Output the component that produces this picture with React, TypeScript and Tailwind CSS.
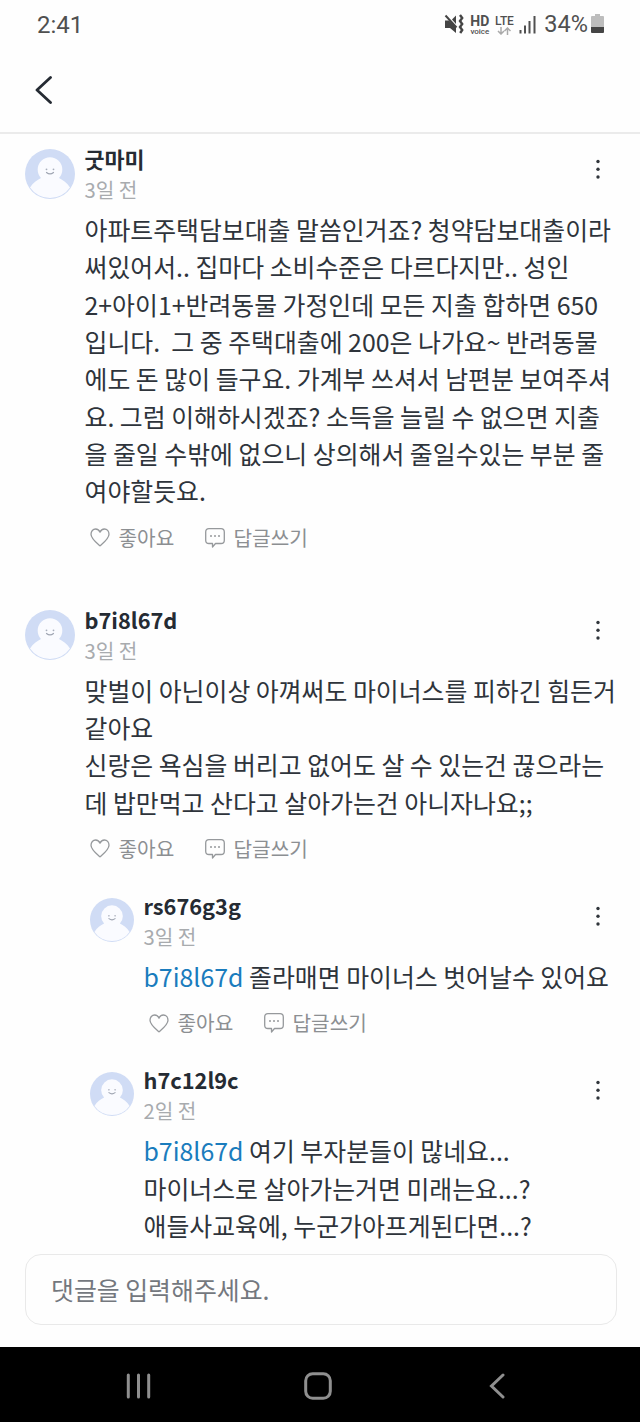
import React from 'react';

interface CommentData {
  author: string;
  time: string;
  mention?: string;
  lines: string[];
  actions: boolean;
  replies?: CommentData[];
}

const comments: CommentData[] = [
  {
    author: '굿마미',
    time: '3일 전',
    lines: [
      '아파트주택담보대출 말씀인거죠? 청약담보대출이라',
      '써있어서.. 집마다 소비수준은 다르다지만.. 성인',
      '2+아이1+반려동물 가정인데 모든 지출 합하면 650',
      '입니다.  그 중 주택대출에 200은 나가요~ 반려동물',
      '에도 돈 많이 들구요. 가계부 쓰셔서 남편분 보여주셔',
      '요. 그럼 이해하시겠죠? 소득을 늘릴 수 없으면 지출',
      '을 줄일 수밖에 없으니 상의해서 줄일수있는 부분 줄',
      '여야할듯요.',
    ],
    actions: true,
  },
  {
    author: 'b7i8l67d',
    time: '3일 전',
    lines: [
      '맞벌이 아닌이상 아껴써도 마이너스를 피하긴 힘든거',
      '같아요',
      '신랑은 욕심을 버리고 없어도 살 수 있는건 끊으라는',
      '데 밥만먹고 산다고 살아가는건 아니자나요;;',
    ],
    actions: true,
    replies: [
      {
        author: 'rs676g3g',
        time: '3일 전',
        mention: 'b7i8l67d',
        lines: ['졸라매면 마이너스 벗어날수 있어요'],
        actions: true,
      },
      {
        author: 'h7c12l9c',
        time: '2일 전',
        mention: 'b7i8l67d',
        lines: ['여기 부자분들이 많네요...', '마이너스로 살아가는거면 미래는요...?', '애들사교육에, 누군가아프게된다면...?'],
        actions: false,
      },
    ],
  },
];

const StatusBar: React.FC = () => (
  <div className="flex h-[50px] shrink-0 items-center justify-between pl-[37px] pr-[36px] font-['Roboto',sans-serif] text-[#505050]">
    <span className="text-[24px] leading-none">2:41</span>
    <div className="flex items-center">
      <svg width="20" height="20" viewBox="0 0 20 20" className="mr-[5px] -mt-[2px]">
        <path d="M1 6.500h4l7 6.500v6l-6-5H1zM12 1.500V10L8 5.500z" fill="#454545" />
        <path d="M1.500 1.500l11 12" stroke="#454545" strokeWidth="2" />
        <path d="M16 1l2.200 3-2.200 3 2.200 3-2.200 3 2.200 3-2 3" fill="none" stroke="#454545" strokeWidth="2.400" />
      </svg>
      <div className="mr-[4px] flex w-[21px] flex-col items-center">
        <span className="text-[14px] font-bold leading-[12px]">HD</span>
        <span className="text-[8px] font-medium leading-[9px]">voice</span>
      </div>
      <div className="mr-[5px] flex w-[20px] flex-col items-center">
        <span className="text-[12px] font-medium leading-[11px] tracking-[-0.2px]">LTE</span>
        <svg width="14" height="8" viewBox="0 0 14 8" fill="none" stroke="#aaa" strokeWidth="1.500">
          <path d="M4 0v7M1 4l3 3 3-3M10.500 8V1M7.500 4l3-3 3 3" />
        </svg>
      </div>
      <svg width="18" height="18" viewBox="0 0 18 18" fill="#505050" className="mr-[7px]">
        <rect x="0.500" y="14" width="2" height="3.500" />
        <rect x="5" y="9.500" width="2" height="8" />
        <rect x="9.500" y="5" width="2" height="12.500" />
        <rect x="14.500" y="0" width="2" height="17.500" />
      </svg>
      <span className="mr-[3px] text-[23.5px] leading-none">34%</span>
      <svg width="13" height="20" viewBox="0 0 13 20" className="-mt-[2px]">
        <path d="M4 0h5v2h3q1 0 1 1v10H0V3q0-1 1-1h3z" fill="#bdbdbd" />
        <path d="M0 13h13v5q0 1-1 1H1q-1 0-1-1z" fill="#454545" />
      </svg>
    </div>
  </div>
);

const Avatar: React.FC<{ className: string }> = ({ className }) => (
  <svg viewBox="0 0 50 50" className={className}>
    <circle cx="25" cy="25" r="25" fill="#d0dcf5" />
    <path d="M5 38.500c3-5 7-7.500 11-9.500a12.300 12.300 0 1 1 18 0c4 2 8 4.500 11 9.500a24.300 24.300 0 0 1-40 0z" fill="#fafbff" />
    <path d="M21.500 23.500q3.500 2.800 7 0" fill="none" stroke="#9fa5b2" strokeWidth="1.200" strokeLinecap="round" />
    <circle cx="21.500" cy="20.300" r="0.900" fill="#a8aebb" />
    <circle cx="28.500" cy="20.300" r="0.900" fill="#a8aebb" />
  </svg>
);

const CommentActions: React.FC = () => (
  <div className="flex h-[54px] items-center pl-[5px] text-[20.200px] leading-none text-[#8c8f92]">
    <svg width="20" height="19" viewBox="0 0 20 19" fill="none" stroke="#96999c" strokeWidth="1.300" className="mr-[9px]">
      <path d="M10 17.800C6 14.300 1 10.500 1 6.200 1 3.200 3 1 5.600 1 7.600 1 9.200 2.200 10 4.200 10.800 2.200 12.400 1 14.400 1 17 1 19 3.200 19 6.200c0 4.300-5 8.100-9 11.600z" strokeLinejoin="round" />
    </svg>
    <span className="mr-[30px] w-[56px] whitespace-nowrap">좋아요</span>
    <svg width="20" height="20" viewBox="0 0 20 20" fill="none" stroke="#96999c" strokeWidth="1.300" className="mr-[9px]">
      <path d="M4 .7h12q3.300 0 3.300 3.300v8.200q0 3.300-3.300 3.300h-5.500L7.500 19v-3.500H4Q.7 15.500 .7 12.200V4Q.7 .7 4 .7z" strokeLinejoin="round" />
      <path d="M5 8h2M9 8h2M13 8h2" strokeWidth="1.600" />
    </svg>
    <span className="whitespace-nowrap">답글쓰기</span>
  </div>
);

const Comment: React.FC<{ data: CommentData; reply?: boolean }> = ({ data, reply }) => (
  <div className="flex items-start">
    <Avatar className={reply ? 'mr-[9.5px] mt-[2px] size-[44px] shrink-0' : 'mr-[9.5px] size-[50px] shrink-0'} />
    <div className="min-w-0 flex-1">
      <div className="flex h-[62px] justify-between">
        <div className="flex flex-col">
          <span className="-mt-[5px] h-[31px] text-[21.780px] font-bold leading-[30px] text-[#252b33]">{data.author}</span>
          <span className="h-[30px] text-[20.200px] leading-[30px] text-[#a8abae]">{data.time}</span>
        </div>
        <svg width="6" height="20" viewBox="0 0 6 20" fill="#30353b" className="mr-[15px] mt-[10px]">
          <circle cx="3" cy="2.500" r="1.700" />
          <circle cx="3" cy="10.300" r="1.700" />
          <circle cx="3" cy="18" r="1.700" />
        </svg>
      </div>
      <div className="mb-px text-[24.890px] leading-[37.330px] text-[#2e343b]">
        {data.lines.map((line, i) => (
          <p key={line} className="whitespace-pre">
            {i === 0 && data.mention && <span className="text-[#1a7cbd]">{data.mention} </span>}
            {line}
          </p>
        ))}
      </div>
      {data.actions && <CommentActions />}
    </div>
  </div>
);

const NavBar: React.FC = () => (
  <nav className="flex h-[75px] shrink-0 items-center bg-black pb-[2px] pl-[126px]">
    <svg width="25" height="26" viewBox="0 0 25 26" stroke="#8f8f8f" strokeWidth="3" strokeLinecap="round" className="mt-[5px]">
      <path d="M2.300 2v22M12.500 2v22M22.700 2v22" />
    </svg>
    <svg width="28" height="28" viewBox="0 0 28 28" fill="none" stroke="#8f8f8f" strokeWidth="3" className="ml-[153px] mt-[5px]">
      <rect x="1.700" y="1.700" width="24.600" height="24.600" rx="7" />
    </svg>
    <svg width="16" height="26" viewBox="0 0 16 26" fill="none" stroke="#8f8f8f" strokeWidth="3" strokeLinecap="round" className="ml-[157px] mt-[5px]">
      <path d="M14 2L2.500 13 14 24" />
    </svg>
  </nav>
);

const App: React.FC = () => {
  return (
    <div className="flex h-[1422px] w-[640px] flex-col overflow-hidden bg-[#fefefe] font-['Noto_Sans_CJK_KR',sans-serif]">
      <StatusBar />
      <header className="flex h-[84px] shrink-0 items-center border-b-2 border-[#ebebeb] pl-[35px]">
        <svg width="17" height="30" viewBox="0 0 17 30" fill="none" stroke="#252b33" strokeWidth="2.800" strokeLinecap="round" strokeLinejoin="round" className="mb-[3px]">
          <path d="M15.500 2.500L2 15l13.500 12.500" />
        </svg>
      </header>

      <main className="flex min-h-0 flex-1 flex-col gap-[45px] overflow-hidden pl-[25px] pr-[24px] pt-[15px]">
        {comments.map((comment) => (
          <div key={comment.author}>
            <Comment data={comment} />
            {comment.replies?.map((item) => (
              <div key={item.author} className="pl-[65px] pt-5">
                <Comment data={item} reply />
              </div>
            ))}
          </div>
        ))}
      </main>

      <footer className="shrink-0 pb-[22px] pl-[25px] pr-[23px]">
        <div className="flex h-[71px] items-center rounded-2xl border-[1.500px] border-[#e9e9e9] pl-[25px] text-[24.890px] text-[#74787e]">
          댓글을 입력해주세요.
        </div>
      </footer>
      <NavBar />
    </div>
  );
};

export default App;
